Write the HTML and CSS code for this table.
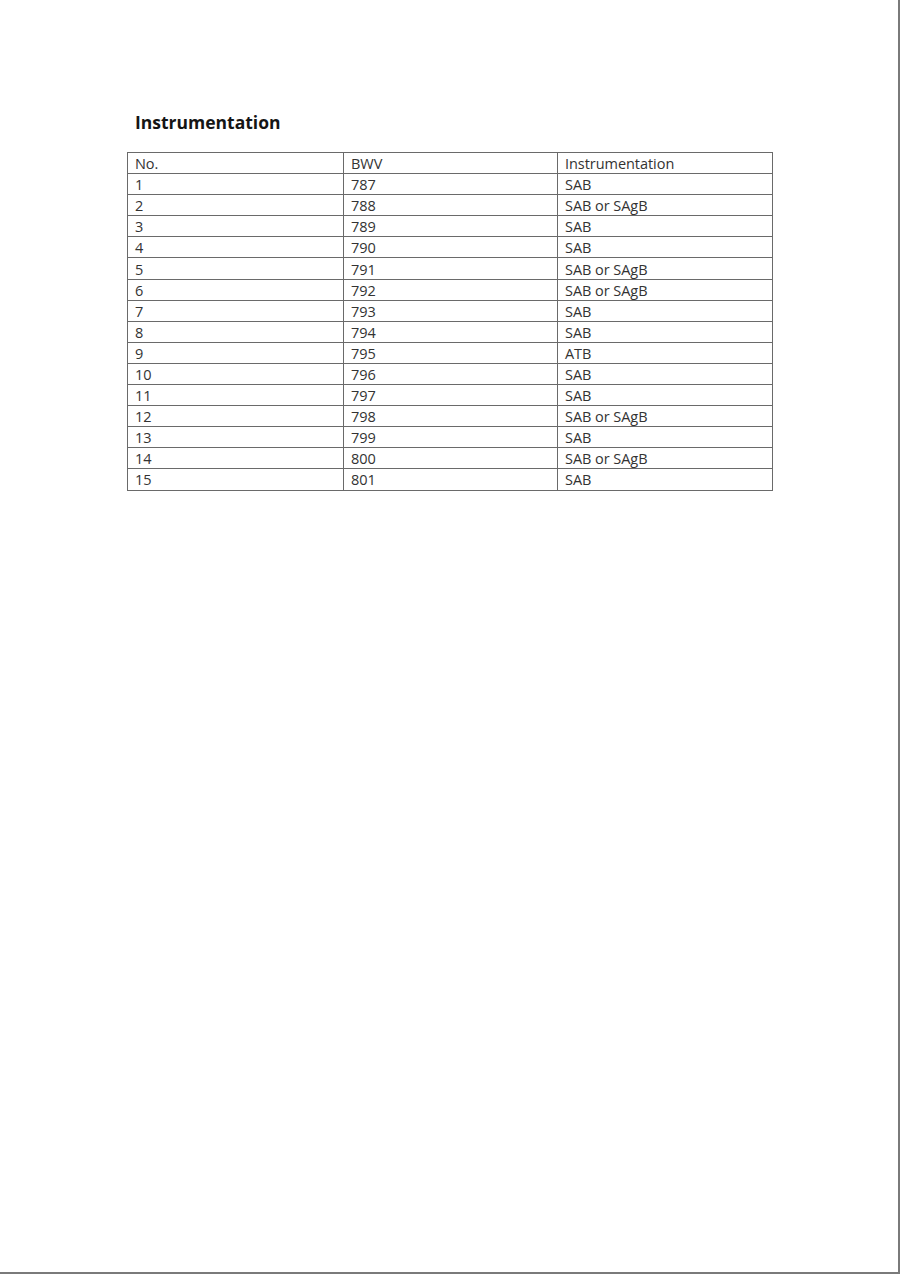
FILE: index.html
```html
<!DOCTYPE html>
<html>
<head>
<meta charset="utf-8">
<link rel="stylesheet" href="styles.css">
</head>
<body>
<div class="page">
  <h1 class="title">Instrumentation</h1>
  <table class="inst">
    <tr><td>No.</td><td>BWV</td><td>Instrumentation</td></tr>
    <tr><td>1</td><td>787</td><td>SAB</td></tr>
    <tr><td>2</td><td>788</td><td>SAB or SAgB</td></tr>
    <tr><td>3</td><td>789</td><td>SAB</td></tr>
    <tr><td>4</td><td>790</td><td>SAB</td></tr>
    <tr><td>5</td><td>791</td><td>SAB or SAgB</td></tr>
    <tr><td>6</td><td>792</td><td>SAB or SAgB</td></tr>
    <tr><td>7</td><td>793</td><td>SAB</td></tr>
    <tr><td>8</td><td>794</td><td>SAB</td></tr>
    <tr><td>9</td><td>795</td><td>ATB</td></tr>
    <tr><td>10</td><td>796</td><td>SAB</td></tr>
    <tr><td>11</td><td>797</td><td>SAB</td></tr>
    <tr><td>12</td><td>798</td><td>SAB or SAgB</td></tr>
    <tr><td>13</td><td>799</td><td>SAB</td></tr>
    <tr><td>14</td><td>800</td><td>SAB or SAgB</td></tr>
    <tr><td>15</td><td>801</td><td>SAB</td></tr>
  </table>
</div>
</body>
</html>
```

FILE: styles.css
```css
html, body {
  margin: 0;
  padding: 0;
  background: #ffffff;
}
.page {
  box-sizing: border-box;
  width: 900px;
  height: 1274px;
  border-right: 2px solid #7a7a7a;
  border-bottom: 2px solid #7a7a7a;
  padding: 110px 0 0 127px;
  font-family: "Open Sans", Lato, sans-serif;
  font-variant-ligatures: none;
  color: #333;
}
.title {
  margin: 0 0 17px 8px;
  font-size: 17.5px;
  font-weight: bold;
  line-height: 25px;
  color: #151515;
}
.inst {
  border-collapse: collapse;
  width: 646px;
  font-size: 14.5px;
  letter-spacing: -0.05px;
}
.inst td {
  border: 1px solid #6a6a6a;
  height: 21.1px;
  padding: 1px 0 0 7px;
  line-height: 19px;
  vertical-align: middle;
  box-sizing: border-box;
}
.inst td:nth-child(1) { width: 216px; }
.inst td:nth-child(2) { width: 214px; }
```
